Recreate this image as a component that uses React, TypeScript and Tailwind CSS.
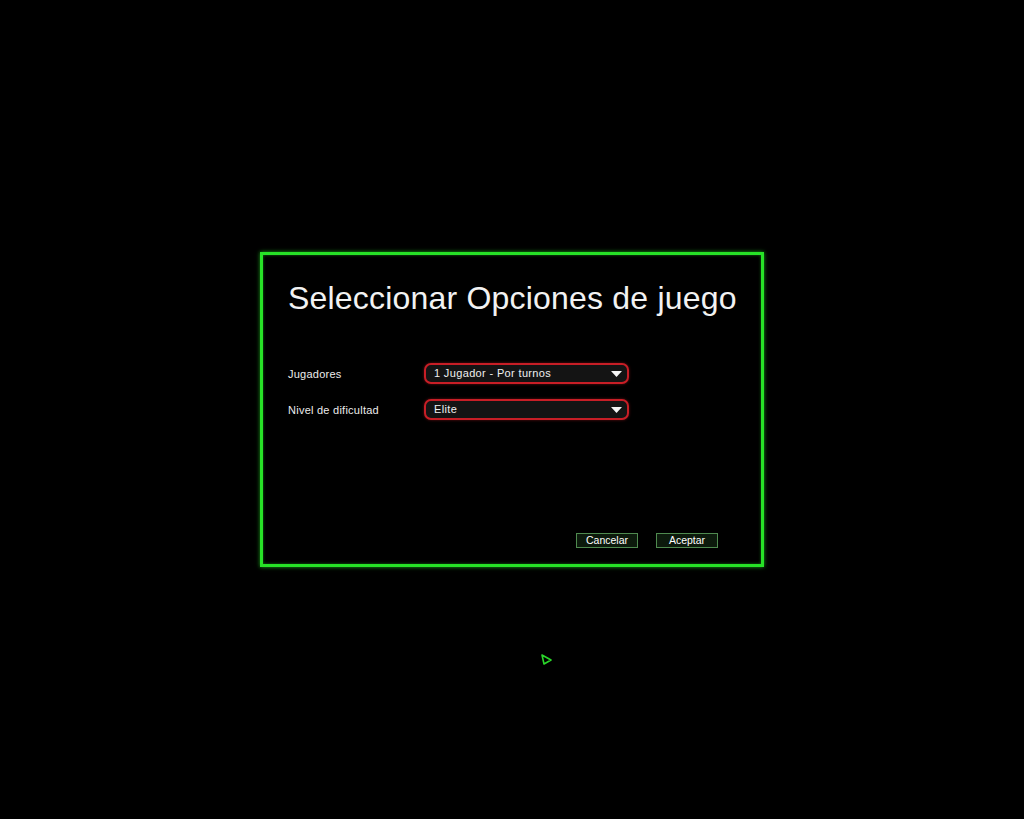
import { useState } from 'react';

const players = ['1 Jugador - Por turnos', '2 Jugadores - Por turnos'];
const levels = ['Fácil', 'Normal', 'Difícil', 'Elite'];

type SelectProps = {
  value: string;
  options: string[];
  onChange: (v: string) => void;
};

// dropdown box with red rounded outline; click cycles through the options
const GameSelect = ({ value, options, onChange }: SelectProps) => (
  <button
    type="button"
    onClick={() => onChange(options[(options.indexOf(value) + 1) % options.length])}
    className="flex items-center justify-between w-[205px] h-[21px] rounded-[7px] border-2 border-[#c81e26] bg-[#141414] shadow-[0_0_3px_rgba(200,30,38,0.5)] pl-[8px] pr-[5px]"
  >
    <span className="text-[11px] leading-none text-[#f0f0f0] tracking-[0.35px]">{value}</span>
    <svg width="11" height="6" viewBox="0 0 11 6">
      <path d="M0 0H11L5.5 6Z" fill="#f4f4f4" />
    </svg>
  </button>
);

const App = () => {
  const [player, setPlayer] = useState(players[0]);
  const [level, setLevel] = useState('Elite');

  return (
    <div
      className="min-h-[819px] w-full bg-black pt-[252px] pl-[260px] text-[#ececec]"
      style={{ fontFamily: '"Liberation Sans", Arial, sans-serif' }}
    >
      <div className="w-[504px] h-[315px] border-[3px] border-[#27e227] shadow-[0_0_4px_rgba(39,226,39,0.7),inset_0_0_3px_rgba(39,226,39,0.5)] flex flex-col pl-[25px] pr-[20px] pt-[25px] pb-[16px]">
        <h1 className="whitespace-nowrap text-[32px] leading-[36px] font-normal tracking-[0.2px] text-[#f2f2f2]">
          Seleccionar Opciones de juego
        </h1>

        <div className="mt-[47px] flex flex-col gap-[15px]">
          <div className="flex items-center">
            <span className="w-[136px] text-[11px] tracking-[0.25px] pt-[1px]">Jugadores</span>
            <GameSelect value={player} options={players} onChange={setPlayer} />
          </div>
          <div className="flex items-center">
            <span className="w-[136px] text-[11px] tracking-[0.25px] pt-[1px]">Nivel de dificultad</span>
            <GameSelect value={level} options={levels} onChange={setLevel} />
          </div>
        </div>

        <div className="mt-auto flex justify-end gap-[18px] pr-[23px]">
          <button className="w-[62px] h-[15px] border border-[#4f8a4f] bg-[#0c1a0c] text-[10.5px] leading-[13px] text-white">
            Cancelar
          </button>
          <button className="w-[62px] h-[15px] border border-[#4f8a4f] bg-[#0c1a0c] text-[10.5px] leading-[13px] text-white">
            Aceptar
          </button>
        </div>
      </div>

      {/* pointer */}
      <svg className="ml-[280px] mt-[86px]" width="13" height="13" viewBox="0 0 13 13">
        <path d="M2 2L11 7L4 11Z" fill="none" stroke="#2ad62a" strokeWidth="1.6" strokeLinejoin="round" />
      </svg>
    </div>
  );
};

export default App;
